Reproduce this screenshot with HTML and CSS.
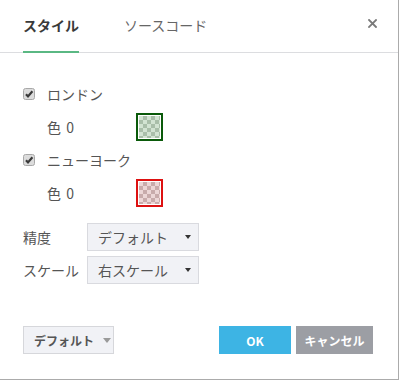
FILE: index.html
```html
<!DOCTYPE html>
<html lang="ja">
<head>
<meta charset="utf-8">
<link rel="stylesheet" href="styles.css">
</head>
<body>
<div class="dialog">
  <div class="header">
    <div class="tabs">
      <div class="tab active">スタイル</div>
      <div class="tab">ソースコード</div>
    </div>
    <svg class="close" width="9" height="9" viewBox="0 0 9 9"><path d="M1 1 L8 8 M8 1 L1 8" stroke="#7a7a7a" stroke-width="1.8" stroke-linecap="square"/></svg>
  </div>
  <div class="body">
    <div class="check-row">
      <svg class="cb" width="12" height="12" viewBox="0 0 12 12"><rect x="0.5" y="0.5" width="11" height="11" rx="2" fill="#dcdcdc" stroke="#a8a8a8"/><path d="M3 6.2 L5 8.4 L9.4 3.2" fill="none" stroke="#3a3a3a" stroke-width="2.2"/></svg>
      <span class="label">ロンドン</span>
    </div>
    <div class="color-row">
      <span class="color-label">色 0</span>
      <span class="swatch green"><span class="checker"></span></span>
    </div>
    <div class="check-row">
      <svg class="cb" width="12" height="12" viewBox="0 0 12 12"><rect x="0.5" y="0.5" width="11" height="11" rx="2" fill="#dcdcdc" stroke="#a8a8a8"/><path d="M3 6.2 L5 8.4 L9.4 3.2" fill="none" stroke="#3a3a3a" stroke-width="2.2"/></svg>
      <span class="label">ニューヨーク</span>
    </div>
    <div class="color-row">
      <span class="color-label">色 0</span>
      <span class="swatch red"><span class="checker"></span></span>
    </div>
    <div class="fields">
      <div class="field-row">
        <span class="field-label">精度</span>
        <div class="select"><span>デフォルト</span><span class="caret"></span></div>
      </div>
      <div class="field-row">
        <span class="field-label">スケール</span>
        <div class="select"><span>右スケール</span><span class="caret"></span></div>
      </div>
    </div>
  </div>
  <div class="footer">
    <div class="btn default">デフォルト<span class="caret light"></span></div>
    <div class="actions">
      <div class="btn ok">OK</div>
      <div class="btn cancel">キャンセル</div>
    </div>
  </div>
</div>
</body>
</html>
```
FILE: styles.css
```css
html, body {
  margin: 0;
  padding: 0;
  background: #fff;
}
body {
  font-family: "Noto Sans CJK JP", "Noto Sans", sans-serif;
  font-size: 14px;
  color: #555;
}
.dialog {
  width: 399px;
  height: 380px;
  box-sizing: border-box;
  border-right: 1px solid #ababab;
  border-bottom: 1px solid #ababab;
  display: flex;
  flex-direction: column;
}
.header {
  height: 53px;
  box-sizing: border-box;
  border-bottom: 1px solid #dcdde0;
  padding: 0 21px 0 23px;
  display: flex;
  justify-content: space-between;
  align-items: flex-start;
}
.tabs {
  display: flex;
  gap: 45px;
}
.tab {
  position: relative;
  height: 52px;
  line-height: 51px;
  font-size: 14px;
  color: #666;
}
.tab.active {
  font-weight: bold;
  color: #3a3a3a;
}
.tab.active::after {
  content: "";
  position: absolute;
  left: 0;
  right: 0;
  bottom: -1px;
  height: 2px;
  background: #5ab883;
}
.close {
  margin-top: 19px;
}
.body {
  padding: 24px 0 0 23px;
}
.check-row, .color-row {
  height: 33px;
  display: flex;
  align-items: center;
}
.cb {
  margin-right: 12px;
  display: block;
}
.label, .color-label {
  line-height: 20px;
}
.color-row {
  padding-left: 24px;
}
.color-label {
  width: 89px;
  word-spacing: 2px;
}
.swatch {
  width: 27px;
  height: 28px;
  box-sizing: border-box;
  border: 2px solid;
  padding: 1px;
  background: #fff;
  display: block;
}
.swatch.green { border-color: #0a5a0a; }
.swatch.red { border-color: #dd1111; }
.checker {
  display: block;
  width: 100%;
  height: 100%;
  background-size: 8px 8px;
  background-position: 0 0, 4px 4px;
}
.green .checker {
  background-color: #d2e3d2;
  background-image:
    linear-gradient(45deg, #a9bea9 25%, transparent 25%, transparent 75%, #a9bea9 75%),
    linear-gradient(45deg, #a9bea9 25%, transparent 25%, transparent 75%, #a9bea9 75%);
}
.red .checker {
  background-color: #ecd6d6;
  background-image:
    linear-gradient(45deg, #c8abab 25%, transparent 25%, transparent 75%, #c8abab 75%),
    linear-gradient(45deg, #c8abab 25%, transparent 25%, transparent 75%, #c8abab 75%);
}
.fields {
  margin-top: 14px;
  display: flex;
  flex-direction: column;
  gap: 5px;
}
.field-row {
  display: flex;
  align-items: center;
  height: 28px;
}
.field-label {
  width: 64px;
  color: #555;
}
.select {
  width: 112px;
  height: 28px;
  box-sizing: border-box;
  border: 1px solid #d9dadf;
  background: #f1f2f6;
  display: flex;
  align-items: center;
  justify-content: space-between;
  padding: 0 7px 0 10px;
  color: #555;
}
.caret {
  width: 0;
  height: 0;
  border-left: 3.5px solid transparent;
  border-right: 3.5px solid transparent;
  border-top: 4px solid #333;
}
.caret.light {
  border-top-color: #9a9a9a;
  border-left-width: 4px;
  border-right-width: 4px;
  border-top-width: 5px;
  margin-left: 9px;
}
.footer {
  margin-top: auto;
  padding: 0 25px 25px 23px;
  display: flex;
  justify-content: space-between;
  align-items: center;
}
.actions {
  display: flex;
  gap: 5px;
}
.btn {
  height: 28px;
  box-sizing: border-box;
  display: flex;
  align-items: center;
  justify-content: center;
  font-size: 12px;
  font-weight: bold;
}
.btn.default {
  width: 91px;
  border: 1px solid #d6d7db;
  background: #f1f2f6;
  color: #555;
  justify-content: flex-start;
  padding-left: 10px;
}
.btn.ok {
  width: 72px;
  background: #3db4e4;
  color: #fff;
}
.btn.cancel {
  width: 77px;
  background: #9c9ea4;
  color: #fff;
}
```
